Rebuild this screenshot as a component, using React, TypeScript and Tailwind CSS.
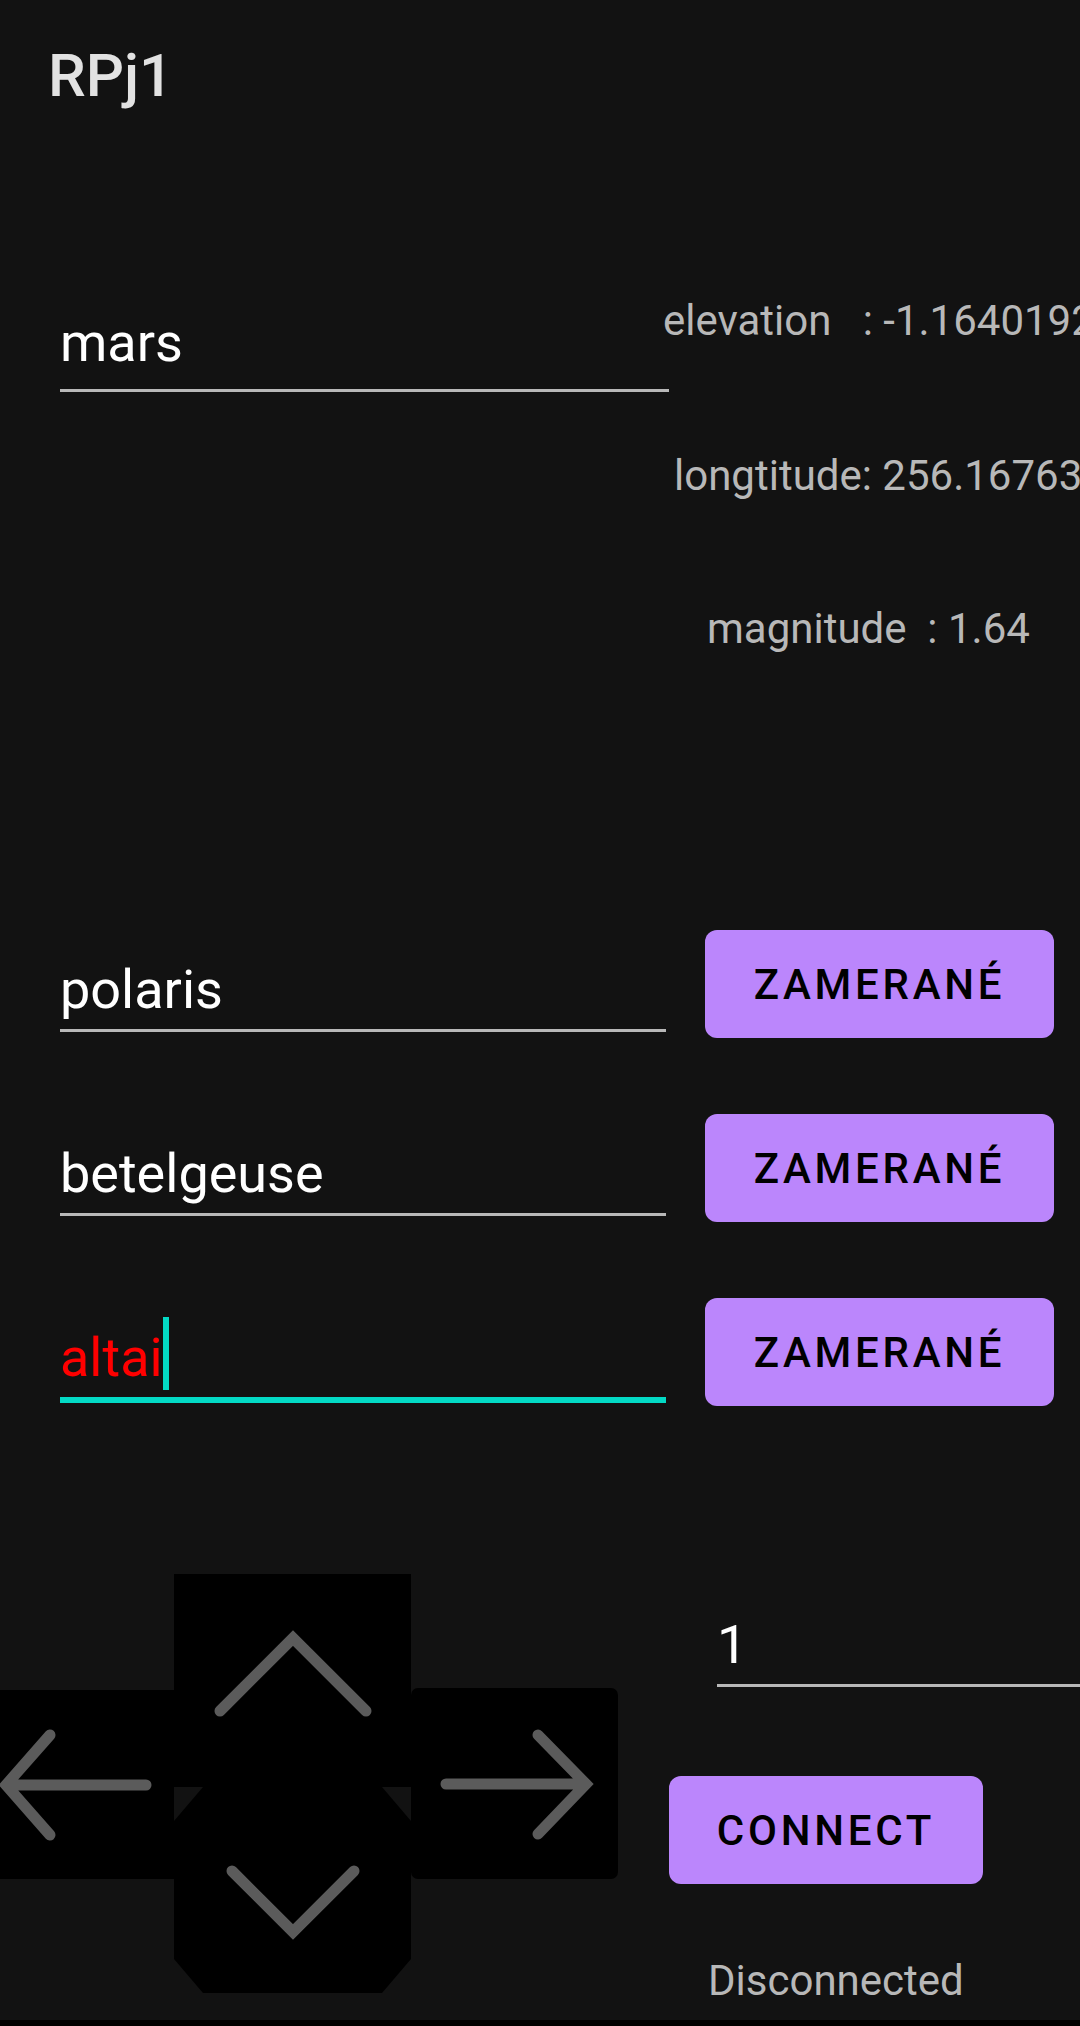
const targets = [
  { name: 'polaris', focused: false },
  { name: 'betelgeuse', focused: false },
  { name: 'altai', focused: true },
];

function Field({ value, focused }: { value: string; focused?: boolean }) {
  if (focused) {
    return (
      <div className="border-b-[6px] border-[#03dac5] pb-[7px]">
        <div className="flex h-[64px]">
          <span className="text-[54px] leading-[64px] text-[#ff0000]">{value}</span>
          <span className="mt-[-9px] h-[73px] w-[6px] bg-[#03dac5]" />
        </div>
      </div>
    );
  }
  return (
    <div className="border-b-[3px] border-[#b8b8b8] pb-[7px]">
      <div className="text-[54px] leading-[64px] text-white">{value}</div>
    </div>
  );
}

function PurpleButton({ label, className }: { label: string; className: string }) {
  return (
    <button
      className={`flex h-[108px] items-center justify-center rounded-[12px] bg-[#bb86fc] text-[42px] font-medium tracking-[3.75px] text-black ${className}`}
    >
      {label}
    </button>
  );
}

function Arrow({ d, w, h }: { d: string; w: number; h: number }) {
  return (
    <svg width={w} height={h} viewBox={`0 0 ${w} ${h}`} className="block">
      <path d={d} fill="none" stroke="#5b5b5b" strokeWidth={11} strokeLinecap="round" strokeLinejoin="miter" />
    </svg>
  );
}

export default function App() {
  return (
    <div className="flex h-[2026px] w-[1080px] flex-col overflow-hidden bg-[#121212] font-['Roboto',_sans-serif]">
      <header className="h-[168px] pl-[48px] pt-[46px]">
        <h1 className="text-[60px] font-medium leading-[60px] text-[#e2e2e2]">RPj1</h1>
      </header>

      <section className="flex items-start">
        <div className="ml-[60px] mt-[143px] w-[609px] shrink-0">
          <div className="border-b-[3px] border-[#b8b8b8] pb-[14px]">
            <div className="text-[54px] leading-[64px] text-white">mars</div>
          </div>
        </div>
        <div className="ml-[-6px] mt-[128px] whitespace-pre text-[42px] leading-[50px] text-[#b8b8b8]">
          elevation   : -1.16401920374
        </div>
      </section>
      <div className="mt-[59px] whitespace-pre pl-[674px] text-[42px] leading-[50px] text-[#b8b8b8]">
        longtitude: 256.167631208
      </div>
      <div className="mt-[103px] whitespace-pre pl-[707px] text-[42px] leading-[50px] text-[#b8b8b8]">
        magnitude  : 1.64
      </div>

      <section className="mt-[276px] flex flex-col gap-[76px]">
        {targets.map((t) => (
          <div key={t.name} className="flex h-[108px] items-start">
            <div className="ml-[60px] mt-[28px] w-[606px] shrink-0">
              <Field value={t.name} focused={t.focused} />
            </div>
            <PurpleButton label="ZAMERANÉ" className="ml-[39px] w-[349px] shrink-0" />
          </div>
        ))}
      </section>

      <section className="mt-[168px] flex items-start">
        <div className="flex w-[618px] shrink-0 items-start">
          <button className="mt-[116px] h-[189px] w-[174px] bg-black">
            <Arrow w={174} h={189} d="M50 45 L6 95 L50 145 M6 95 L146 95" />
          </button>
          <div className="flex w-[237px] flex-col">
            <button className="h-[213px] w-[237px] bg-black">
              <Arrow w={237} h={213} d="M46 137 L119 64 L192 137" />
            </button>
            <button className="h-[206px] w-[237px] bg-black [clip-path:polygon(29px_0,calc(100%_-_29px)_0,100%_34px,100%_calc(100%_-_34px),calc(100%_-_29px)_100%,29px_100%,0_calc(100%_-_34px),0_34px)]">
              <Arrow w={237} h={206} d="M58 84 L119 145 L180 84" />
            </button>
          </div>
          <button className="mt-[114px] h-[191px] w-[207px] rounded-[7px] bg-black">
            <Arrow w={207} h={191} d="M127 47 L175 96 L127 146 M175 96 L35 96" />
          </button>
        </div>

        <div className="ml-[51px] flex flex-1 flex-col">
          <div className="ml-[48px] mt-[39px]">
            <Field value="1" />
          </div>
          <PurpleButton label="CONNECT" className="mt-[89px] w-[314px]" />
          <div className="mt-[72px] pl-[39px] text-[42px] leading-[50px] text-[#b8b8b8]">Disconnected</div>
        </div>
      </section>

      <div className="mt-auto h-[6px] bg-black" />
    </div>
  );
}
